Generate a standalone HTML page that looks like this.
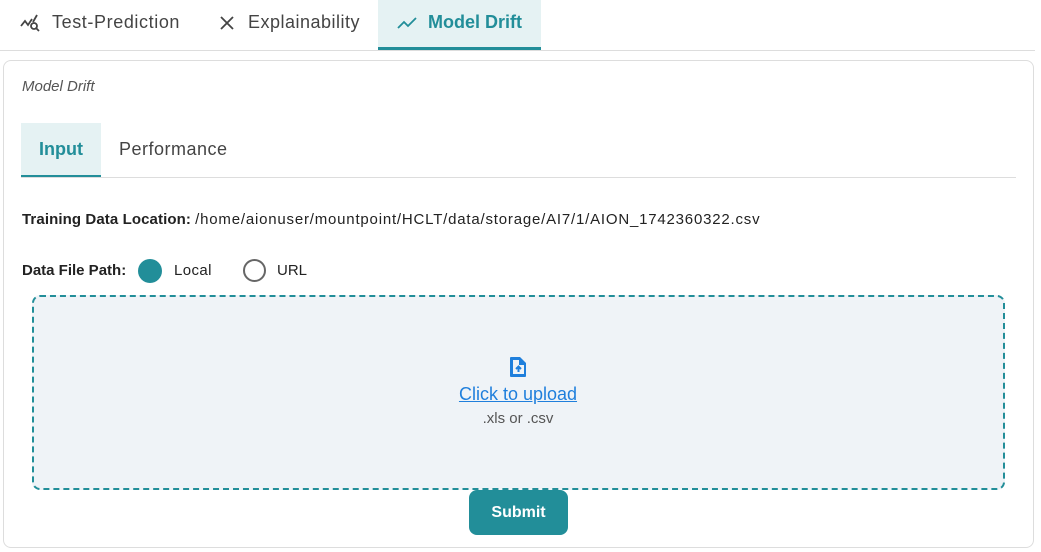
<!DOCTYPE html>
<html><head><style>
body{margin:0;background:#fff;font-family:"Liberation Sans",sans-serif;width:1041px;height:552px;position:relative;overflow:hidden;color:#222}
.a{position:absolute}
</style></head><body>
<div class="a" style="left:0;top:50px;width:1035px;height:1px;background:#ddd"></div>
<div class="a" style="left:20px;top:12px;font-size:18px;color:#444;display:flex;align-items:center">
<svg width="22" height="20" viewBox="0 0 22 20" fill="none" stroke="#444" stroke-width="1.8"><path d="M1 13l4-5 3 4 4-6"/><path d="M13 9l4-7"/><circle cx="14" cy="13" r="3"/><path d="M16 15l3 3"/></svg>
<span style="margin-left:10px;letter-spacing:0.6px">Test-Prediction</span></div>
<div class="a" style="left:219px;top:12px;font-size:18px;color:#444;display:flex;align-items:center">
<svg width="16" height="16" viewBox="0 0 16 16" stroke="#444" stroke-width="1.8"><path d="M2 2l12 12M14 2L2 14"/></svg>
<span style="margin-left:13px;letter-spacing:0.5px">Explainability</span></div>
<div class="a" style="left:378px;top:0;width:163px;height:47px;background:#e5f2f3;border-bottom:3px solid #228e99"></div>
<div class="a" style="left:397px;top:12px;font-size:18px;color:#228e99;font-weight:bold;display:flex;align-items:center">
<svg width="20" height="14" viewBox="0 0 20 14" fill="none" stroke="#228e99" stroke-width="1.8"><path d="M1 12l6-6 4 4 8-8"/></svg>
<span style="margin-left:11px">Model Drift</span></div>
<div class="a" style="left:3px;top:60px;width:1029px;height:486px;border:1px solid #ddd;border-radius:8px"></div>
<div class="a" style="left:22px;top:78px;font-size:15px;font-style:italic;color:#555">Model Drift</div>
<div class="a" style="left:21px;top:123px;width:80px;height:52px;background:#e5f2f3;border-bottom:2px solid #228e99"></div>
<div class="a" style="left:21px;top:177px;width:995px;height:1px;background:#ddd"></div>
<div class="a" style="left:39px;top:139px;font-size:18px;color:#228e99;font-weight:bold">Input</div>
<div class="a" style="left:119px;top:139px;font-size:18px;color:#444;letter-spacing:0.5px">Performance</div>
<div class="a" style="left:22px;top:211px;font-size:15px;white-space:nowrap"><b style="letter-spacing:0.1px">Training Data Location:</b> <span style="letter-spacing:0.8px">/home/aionuser/mountpoint/HCLT/data/storage/AI7/1/AION_1742360322.csv</span></div>
<div class="a" style="left:22px;top:262px;font-size:15px"><b>Data File Path:</b></div>
<div class="a" style="left:138px;top:259px;width:24px;height:24px;border-radius:50%;background:#228e99"></div>
<div class="a" style="left:174px;top:262px;font-size:15px;letter-spacing:0.4px">Local</div>
<div class="a" style="left:243px;top:259px;width:19px;height:19px;border-radius:50%;border:2px solid #666"></div>
<div class="a" style="left:277px;top:262px;font-size:15px">URL</div>
<div class="a" style="left:32px;top:295px;width:969px;height:191px;border:2px dashed #228e99;border-radius:8px;background:#eff3f7"></div>
<svg class="a" style="left:508px;top:356px" width="20" height="22" viewBox="0 0 20 22"><path d="M3 1h9l6 6v13a1 1 0 0 1-1 1H3a1 1 0 0 1-1-1V2a1 1 0 0 1 1-1z" fill="#1f7fdc"/><path d="M5 4h6v5h5v9H5z" fill="#eff3f7"/><path d="M10.5 16v-5M8 13l2.5-2.5L13 13" fill="none" stroke="#1f7fdc" stroke-width="2"/></svg>
<div class="a" style="left:0;width:1036px;top:384px;text-align:center;font-size:18px;color:#1f7fdc;text-decoration:underline">Click to upload</div>
<div class="a" style="left:0;width:1036px;top:410px;text-align:center;font-size:15px;color:#555">.xls or .csv</div>
<div class="a" style="left:469px;top:490px;width:99px;height:45px;background:#228e99;border-radius:8px;color:#fff;font-weight:bold;font-size:16px;text-align:center;line-height:45px">Submit</div>
</body></html>
